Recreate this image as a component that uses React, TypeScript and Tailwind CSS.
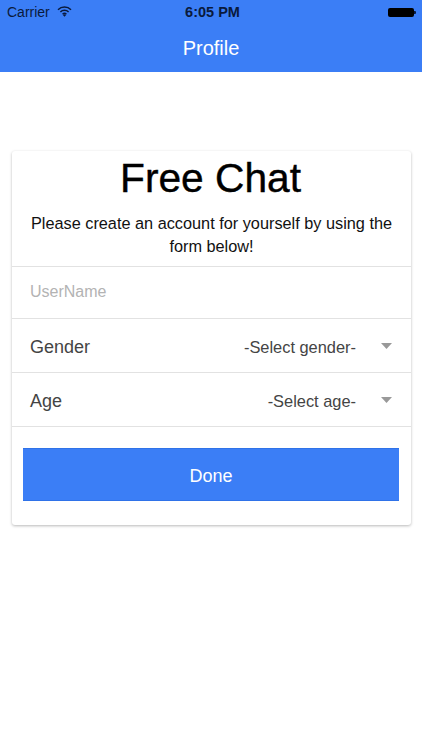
export default function App() {
  const font = "font-['Liberation_Sans',Arial,sans-serif]";
  const Row = ({ label, value }: { label: string; value: string }) => (
    <div className="flex h-[54px] items-center border-b border-[#e2e2e2] pl-[18px] pr-[19px]">
      <span className="mt-[4px] flex-1 text-[18px] text-[#444444]">{label}</span>
      <span className="mt-[3px] text-[16.4px] text-[#444444]">{value}</span>
      <svg width="11" height="6" viewBox="0 0 11 6" className="ml-[25px]">
        <path d="M0 0h11L5.5 6z" fill="#999999" />
      </svg>
    </div>
  );
  return (
    <div className={`${font} h-[750px] w-[422px] bg-white`}>
      <header className="h-[72px] bg-[#3b7ef6]">
        <div className="relative flex h-[24px] items-center pl-[7px] pr-[6px] text-[#0a1a3c]">
          <span className="text-[14px]">Carrier</span>
          <svg width="15" height="11" viewBox="0 0 15 11" className="mb-[2px] ml-[7px]" fill="none" stroke="#0a1a3c" strokeWidth="1.5">
            <path d="M1 3.8a9.2 9.2 0 0 1 13 0" />
            <path d="M3.4 6a5.8 5.8 0 0 1 8.2 0" />
            <path d="M5.6 8.2a2.7 2.7 0 0 1 3.8 0" />
            <path d="M7.5 10.8 5.9 9a2.3 2.3 0 0 1 3.2 0z" fill="#0a1a3c" stroke="none" />
          </svg>
          <span className="absolute left-[3px] right-0 top-[2px] text-center text-[14.5px] font-bold">6:05 PM</span>
          <div className="ml-auto flex items-center">
            <div className="h-[9px] w-[26px] rounded-[2px] bg-black" />
            <div className="h-[3px] w-[2px] rounded-r-[1px] bg-[#0a1a3c]" />
          </div>
        </div>
        <div className="flex h-[48px] items-center justify-center text-[20px] text-white">Profile</div>
      </header>
      <main className="ml-[12px] mr-[11px] pt-[79px]">
        <div className="rounded-[3px] bg-white shadow-[0_1px_3px_rgba(0,0,0,0.28)]">
          <div className="border-b border-[#e2e2e2] px-[13px] pb-[8px] text-center">
            <h1 className="h-[54px] pr-[2px] text-[40.7px] leading-[54px] text-black [-webkit-text-stroke:0.4px_black]">Free Chat</h1>
            <p className="mt-[7px] text-[16.3px] leading-[23px] text-[#111111]">Please create an account for yourself by using the form below!</p>
          </div>
          <div className="flex h-[52px] items-center border-b border-[#e2e2e2] pb-[2px] pl-[18px] text-[16px] text-[#b3b3b3]">UserName</div>
          <Row label="Gender" value="-Select gender-" />
          <Row label="Age" value="-Select age-" />
          <div className="pb-[24px] pl-[11px] pr-[12px] pt-[21px]">
            <button className="block h-[53px] w-full border-y border-[#2f72e8] bg-[#3b7ef6] pt-[3px] text-[18px] text-white">Done</button>
          </div>
        </div>
      </main>
    </div>
  );
}
